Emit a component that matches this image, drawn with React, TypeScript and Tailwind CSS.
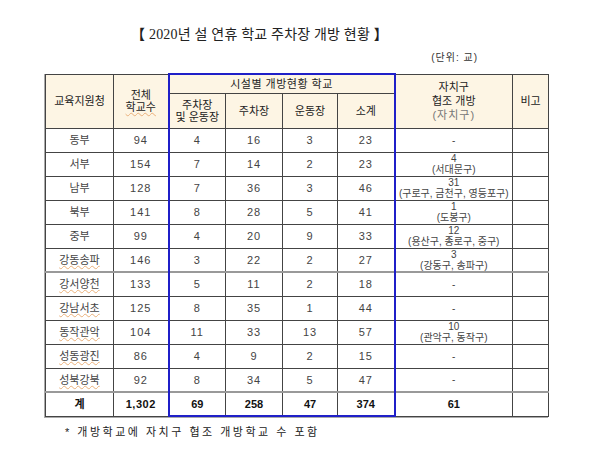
import React from "react";

type Row = {
  name: string;
  total: string;
  both: string;
  parking: string;
  field: string;
  sum: string;
  gu: string;
  guNames?: string;
  wavy?: boolean;
  thick?: boolean;
};

const rows: Row[] = [
  { name: "동부", total: "94", both: "4", parking: "16", field: "3", sum: "23", gu: "-" },
  { name: "서부", total: "154", both: "7", parking: "14", field: "2", sum: "23", gu: "4", guNames: "(서대문구)" },
  { name: "남부", total: "128", both: "7", parking: "36", field: "3", sum: "46", gu: "31", guNames: "(구로구, 금천구, 영등포구)" },
  { name: "북부", total: "141", both: "8", parking: "28", field: "5", sum: "41", gu: "1", guNames: "(도봉구)" },
  { name: "중부", total: "99", both: "4", parking: "20", field: "9", sum: "33", gu: "12", guNames: "(용산구, 종로구, 중구)" },
  { name: "강동송파", total: "146", both: "3", parking: "22", field: "2", sum: "27", gu: "3", guNames: "(강동구, 송파구)", wavy: true },
  { name: "강서양천", total: "133", both: "5", parking: "11", field: "2", sum: "18", gu: "-", wavy: true, thick: true },
  { name: "강남서초", total: "125", both: "8", parking: "35", field: "1", sum: "44", gu: "-", wavy: true },
  { name: "동작관악", total: "104", both: "11", parking: "33", field: "13", sum: "57", gu: "10", guNames: "(관악구, 동작구)", wavy: true },
  { name: "성동광진", total: "86", both: "4", parking: "9", field: "2", sum: "15", gu: "-", wavy: true },
  { name: "성북강북", total: "92", both: "8", parking: "34", field: "5", sum: "47", gu: "-", wavy: true },
];

const cell = "border border-[#444] text-center align-middle p-0 whitespace-nowrap";
const head = "border border-[#444] text-center align-middle p-0 bg-[#fdf5e4] text-[#222] font-normal text-[11px] whitespace-nowrap";
const wavy = "underline decoration-wavy decoration-[#eab07a] decoration-1 underline-offset-1";
const blueL = "border-l-2 border-l-[#1f1fc8]";
const blueR = "border-r-2 border-r-[#1f1fc8]";
const blueT = "border-t-2 border-t-[#1f1fc8]";
const blueB = "border-b-2 border-b-[#1f1fc8]";

export default function App() {
  return (
    <div className="w-[600px] h-[467px] bg-white font-['Liberation_Sans','Noto_Sans_CJK_KR',sans-serif] text-[#444]">
      <div className="pt-[27px] pl-[45px] w-[548px]">
        <div className="pr-[74px] text-center text-[14px] leading-[16px] text-[#222] font-['Liberation_Serif','Noto_Sans_CJK_KR',serif] tracking-[0.2px]">
          <span className="font-bold">【</span> 2020년 설 연휴 학교 주차장 개방 현황 <span className="font-bold">】</span>
        </div>
        <div className="mt-[9px] pr-[70px] text-right text-[10px] leading-[12px] text-[#333] tracking-[1px]">(단위: 교)</div>
        <table className="mt-[9px] border-collapse table-fixed w-[503px] text-[11px] leading-[12px] shadow-[-1px_1px_0_#aaa]">
          <colgroup>
            <col className="w-[68px]" />
            <col className="w-[55px]" />
            <col className="w-[57px]" />
            <col className="w-[57px]" />
            <col className="w-[55px]" />
            <col className="w-[57px]" />
            <col className="w-[118px]" />
            <col className="w-[36px]" />
          </colgroup>
          <thead>
            <tr className="h-[19px]">
              <th rowSpan={2} className={head}>교육지원청</th>
              <th rowSpan={2} className={`${head} leading-[12px]`}>
                전체
                <br />
                <span className={wavy}>학교수</span>
              </th>
              <th colSpan={4} className={`${head} ${blueT} ${blueL} ${blueR} tracking-[0.5px]`}>
                시설별 개방현황 학교
              </th>
              <th rowSpan={2} className={`${head} leading-[14px]`}>
                자치구
                <br />
                협조 개방
                <br />
                <span className="text-[#777] tracking-[1px]">(자치구)</span>
              </th>
              <th rowSpan={2} className={head}>비고</th>
            </tr>
            <tr className="h-[35px]">
              <th className={`${head} leading-[12px] ${blueL}`}>
                주차장
                <br />및 운동장
              </th>
              <th className={head}>주차장</th>
              <th className={head}>운동장</th>
              <th className={`${head} ${blueR}`}>소계</th>
            </tr>
          </thead>
          <tbody>
            {rows.map((r) => (
              <tr key={r.name} className={`h-[24px] ${r.thick ? "border-t-2 border-t-[#999]" : ""}`}>
                <td className={cell}>
                  <span className={r.wavy ? wavy : ""}>{r.name}</span>
                </td>
                <td className={`${cell} tracking-[1px]`}>{r.total}</td>
                <td className={`${cell} tracking-[1px] ${blueL}`}>{r.both}</td>
                <td className={`${cell} tracking-[1px]`}>{r.parking}</td>
                <td className={`${cell} tracking-[1px]`}>{r.field}</td>
                <td className={`${cell} tracking-[1px] ${blueR}`}>{r.sum}</td>
                <td className={`${cell} text-[10px] leading-[11px]`}>
                  {r.gu}
                  {r.guNames && (
                    <>
                      <br />
                      {r.guNames}
                    </>
                  )}
                </td>
                <td className={cell}></td>
              </tr>
            ))}
            <tr className="h-[24px] border-t-2 border-t-[#999] font-bold text-[#111]">
              <td className={cell}>계</td>
              <td className={`${cell} tracking-[0.5px]`}>1,302</td>
              <td className={`${cell} ${blueL} ${blueB}`}>69</td>
              <td className={`${cell} ${blueB}`}>258</td>
              <td className={`${cell} ${blueB}`}>47</td>
              <td className={`${cell} ${blueR} ${blueB}`}>374</td>
              <td className={cell}>61</td>
              <td className={cell}></td>
            </tr>
          </tbody>
        </table>
        <div className="mt-[8px] pl-[20px] text-[11px] leading-[14px] text-[#222] tracking-[2.5px]">
          * 개방학교에 자치구 협조 개방학교 수 포함
        </div>
      </div>
    </div>
  );
}
